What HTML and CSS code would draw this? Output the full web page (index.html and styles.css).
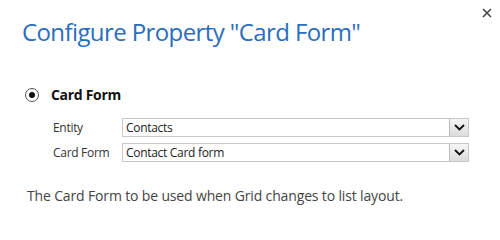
FILE: index.html
```html
<!DOCTYPE html>
<html>
<head>
    <title>Configure Property</title>
    <link rel="stylesheet" href="styles.css">
</head>
<body>
    <div class="dialog">
        <button class="close-button" title="Close">
            <svg width="10" height="10" viewBox="0 0 10 10">
                <path d="M1 1 L9 9 M9 1 L1 9" stroke="#444" stroke-width="1.6" fill="none"/>
            </svg>
        </button>

        <h1 class="dialog-title">Configure Property "Card Form"</h1>

        <div class="option">
            <label class="option-label">
                <span class="radio"><span class="radio-dot"></span></span>
                Card Form
            </label>

            <div class="fields">
                <label for="entity">Entity</label>
                <div class="select-box">
                    <span class="select-value">Contacts</span>
                    <span class="select-arrow">
                        <svg width="11" height="7" viewBox="0 0 11 7">
                            <path d="M1 1 L5.5 5.5 L10 1" stroke="#111" stroke-width="1.8" fill="none"/>
                        </svg>
                    </span>
                </div>

                <label for="card_form">Card Form</label>
                <div class="select-box">
                    <span class="select-value">Contact Card form</span>
                    <span class="select-arrow">
                        <svg width="11" height="7" viewBox="0 0 11 7">
                            <path d="M1 1 L5.5 5.5 L10 1" stroke="#111" stroke-width="1.8" fill="none"/>
                        </svg>
                    </span>
                </div>
            </div>
        </div>

        <p class="description">The Card Form to be used when Grid changes to list layout.</p>
    </div>
</body>
</html>
```

FILE: styles.css
```css
body {
    margin: 0;
    font-family: "Open Sans", Arial, sans-serif;
    background-color: #fff;
    color: #222;
}

.dialog {
    position: relative;
    width: 500px;
    height: 240px;
}

.close-button {
    position: absolute;
    top: 7px;
    right: 7px;
    width: 12px;
    height: 12px;
    padding: 0;
    border: none;
    background: none;
    display: flex;
    align-items: center;
    justify-content: center;
}

.dialog-title {
    margin: 0;
    padding: 16px 0 0 22px;
    font-size: 24px;
    font-weight: normal;
    line-height: 32px;
    letter-spacing: -0.6px;
    color: #2a6ebb;
}

.option {
    padding: 37px 0 0 25px;
}

.option-label {
    display: flex;
    align-items: center;
    gap: 12px;
    font-size: 14px;
    font-weight: bold;
    letter-spacing: -0.3px;
    color: #111;
}

.radio {
    width: 12px;
    height: 12px;
    border: 1px solid #555;
    border-radius: 50%;
    display: flex;
    align-items: center;
    justify-content: center;
}

.radio-dot {
    width: 6px;
    height: 6px;
    border-radius: 50%;
    background-color: #111;
}

.fields {
    display: grid;
    grid-template-columns: 69px 347px;
    row-gap: 6px;
    align-items: center;
    margin: 14px 0 0 28px;
    font-size: 12px;
    letter-spacing: -0.3px;
    color: #333;
}

.select-box {
    display: flex;
    align-items: center;
    height: 19px;
    border: 1px solid #c8c8c8;
    box-sizing: border-box;
}

.select-value {
    flex: 1;
    padding-left: 3px;
    color: #222;
}

.select-arrow {
    width: 18px;
    height: 17px;
    border-left: 1px solid #bbb;
    background: linear-gradient(#f6f6f6, #dcdcdc);
    display: flex;
    align-items: center;
    justify-content: center;
}

.description {
    margin: 24px 0 0 27px;
    font-size: 14px;
    letter-spacing: -0.15px;
    color: #444;
}
```
